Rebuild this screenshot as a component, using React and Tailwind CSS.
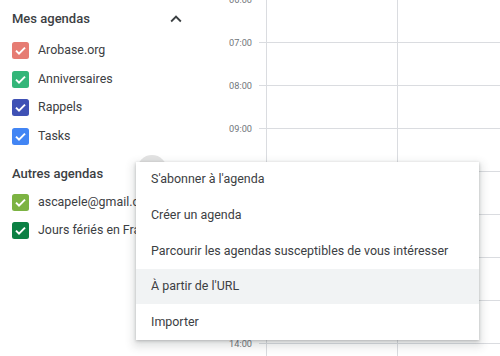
import React from "react";

const mine = [
  { name: "Arobase.org", color: "#e67c73" },
  { name: "Anniversaires", color: "#33b679" },
  { name: "Rappels", color: "#3f51b5" },
  { name: "Tasks", color: "#4285f4" },
];

const others = [
  { name: "ascapele@gmail.com", color: "#7cb342" },
  { name: "Jours fériés en France", color: "#0b8043" },
];

const hours = ["06:00", "07:00", "08:00", "09:00", "10:00", "11:00", "12:00", "13:00", "14:00"];

const menuItems = [
  "S'abonner à l'agenda",
  "Créer un agenda",
  "Parcourir les agendas susceptibles de vous intéresser",
  "À partir de l'URL",
  "Importer",
];

const CheckBox = ({ color }) => (
  <svg width="17" height="17" viewBox="0 0 17 17" className="shrink-0">
    <rect x="0" y="0" width="17" height="17" rx="2.5" fill={color} />
    <path d="M4 8.6l3 3 6-6" fill="none" stroke="#fff" strokeWidth="2" />
  </svg>
);

const CalendarRow = ({ item }) => (
  <div className="flex h-[28.7px] items-center gap-[9px] pl-3 whitespace-nowrap">
    <CheckBox color={item.color} />
    <span className="text-[12.4px] text-[#3c4043]">{item.name}</span>
  </div>
);

const DayColumn = ({ border }) => (
  <div className={`flex flex-col ${border ? "w-[131px] border-l border-[#dadce0]" : "w-[7px]"}`}>
    {hours.map((h) => (
      <div key={h} className="h-[43px] shrink-0 border-t border-[#dadce0]" />
    ))}
  </div>
);

export default function App() {
  return (
    <div className="relative h-[356px] w-[500px] overflow-hidden bg-white font-['Roboto',sans-serif]">
      <div className="flex">
        {/* Sidebar */}
        <div className="w-[220px] shrink-0 pt-[8px]">
          <div className="flex h-[22px] items-center justify-between pl-3 pr-[34px]">
            <span className="text-[13px] font-medium text-[#3c4043]">Mes agendas</span>
            <svg width="22" height="22" viewBox="0 0 24 24" className="-mr-[1px]">
              <path d="M7.41 15.41 12 10.83l4.59 4.58L18 14l-6-6-6 6z" fill="#3c4043" />
            </svg>
          </div>
          <div className="mt-[6px]">
            {mine.map((item) => (
              <CalendarRow key={item.name} item={item} />
            ))}
          </div>
          <div className="mt-[12px] flex h-[22px] items-center pl-3">
            <span className="text-[13px] font-medium text-[#3c4043]">Autres agendas</span>
          </div>
          <div className="mt-[3px]">
            {others.map((item) => (
              <CalendarRow key={item.name} item={item} />
            ))}
          </div>
        </div>

        {/* Time gutter */}
        <div className="-mt-[22px] flex w-[39px] shrink-0 flex-col items-end pr-[7px]">
          {hours.map((h) => (
            <div key={h} className="flex h-[43px] shrink-0 items-center text-[9.2px] text-[#70757a]">
              {h}
            </div>
          ))}
        </div>

        {/* Grid */}
        <div className="-mt-[1px] flex">
          <DayColumn />
          <DayColumn border />
          <DayColumn border />
        </div>
      </div>

      {/* Hover circle behind menu */}
      <div className="absolute left-[137px] top-[155px] h-[30px] w-[30px] rounded-full bg-[#e3e3e3]" />

      {/* Menu */}
      <div className="absolute left-[136px] top-[162px] w-[343px] bg-white shadow-[0_4px_8px_3px_rgba(60,64,67,0.15),0_1px_3px_rgba(60,64,67,0.3)]">
        {menuItems.map((label) => (
          <div
            key={label}
            className={`flex h-[35.6px] items-center px-[15px] text-[12.45px] text-[#3c4043] whitespace-nowrap ${
              label === "À partir de l'URL" ? "bg-[#f1f3f4]" : ""
            }`}
          >
            {label}
          </div>
        ))}
      </div>
    </div>
  );
}
